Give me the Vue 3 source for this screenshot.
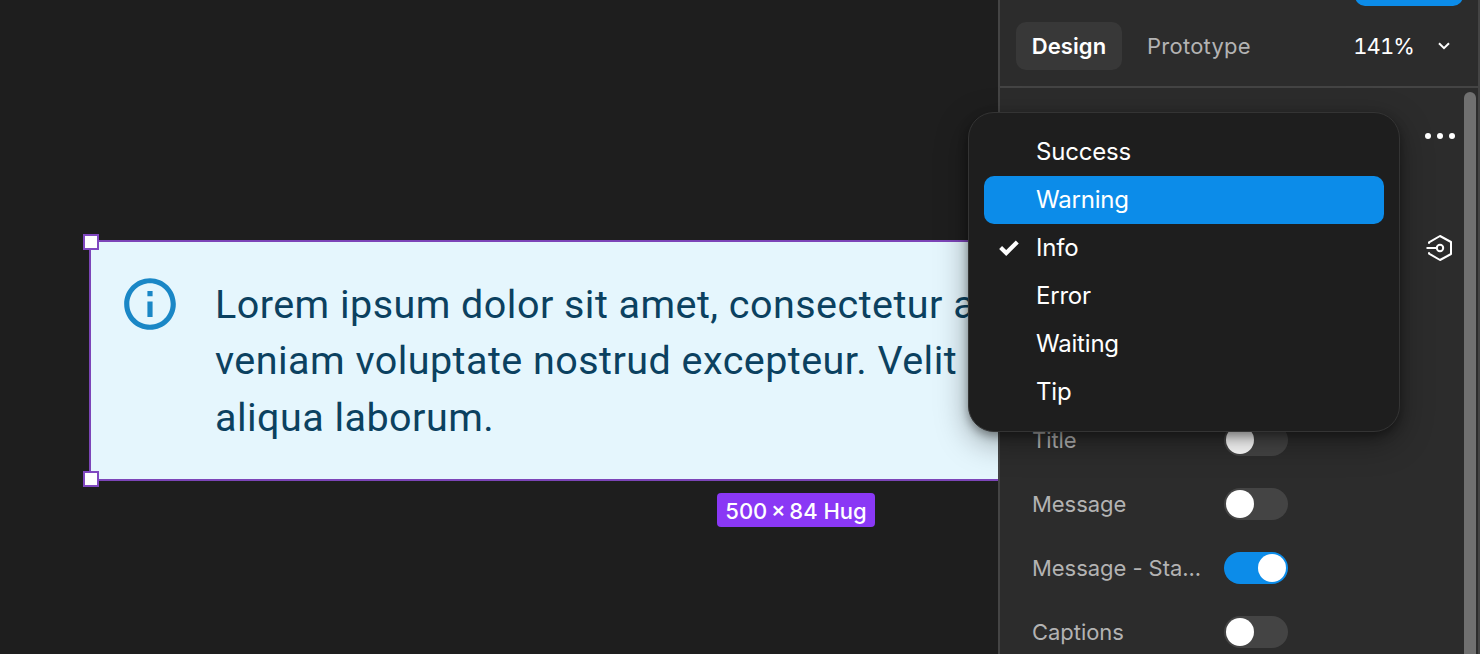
<template>
  <div class="editor">
    <main class="canvas">
      <div class="frame">
        <div class="alert">
          <svg class="alert-icon" viewBox="0 0 24 24" width="62" height="62" fill="#1a87c6"><path d="M11 7h2v2h-2zm0 4h2v6h-2zm1-9C6.48 2 2 6.48 2 12s4.48 10 10 10 10-4.48 10-10S17.52 2 12 2zm0 18c-4.41 0-8-3.59-8-8s3.59-8 8-8 8 3.59 8 8-3.59 8-8 8z"/></svg>
          <div class="alert-text">
            <div v-for="line in lines" :key="line" class="alert-line">{{ line }}</div>
          </div>
        </div>
        <span class="handle top"></span>
        <span class="handle bottom"></span>
        <span class="size-badge"><span class="size">500 × 84</span> Hug</span>
      </div>
    </main>
    <aside class="panel">
      <div class="share-btn"></div>
      <div class="panel-header">
        <button v-for="t in tabs" :key="t" class="tab" :class="{ active: activeTab === t }" @click="activeTab = t">{{ t }}</button>
        <div class="zoom">
          <span>141%</span>
          <svg viewBox="0 0 12 8" width="12" height="8" fill="none" stroke="#fff" stroke-width="2"><path d="M1 1.2l5 5 5-5"/></svg>
        </div>
      </div>
      <div class="panel-body">
        <div class="tools">
          <svg viewBox="0 0 30 6" width="30" height="6" fill="#fff"><circle cx="3" cy="3" r="3"/><circle cx="15" cy="3" r="3"/><circle cx="27" cy="3" r="3"/></svg>
          <svg class="instance-icon" viewBox="0 0 28 28" width="28" height="28" fill="none" stroke="#fff" stroke-width="2" stroke-linejoin="round"><path d="M4 9.8V8.4L15 2l11 6v12L15 26 4 19.6v-1.4"/><path d="M1.5 14h10"/><circle cx="15" cy="14" r="3.2"/></svg>
        </div>
        <div class="props">
          <div v-for="p in props" :key="p.name" class="prop">
            <span class="prop-name">{{ p.name }}</span>
            <span class="toggle" :class="{ on: p.on }" @click="p.on = !p.on"></span>
          </div>
        </div>
        <div class="scrollbar"></div>
      </div>
    </aside>
    <!-- variant dropdown -->
    <ul class="menu">
      <li v-for="o in options" :key="o" class="option" :class="{ hover: hovered === o }" @mouseenter="hovered = o" @click="selected = o">
        <span class="check">
          <svg v-if="selected === o" viewBox="0 0 20 16" width="20" height="16" fill="none" stroke="#fff" stroke-width="4.2"><path d="M1.6 7.6l5.6 5.4L18.3 2"/></svg>
        </span>
        <span class="option-name">{{ o }}</span>
      </li>
    </ul>
  </div>
</template>

<script setup>
import { ref } from 'vue'

const lines = [
  'Lorem ipsum dolor sit amet, consectetur a',
  'veniam voluptate nostrud excepteur. Velit',
  'aliqua laborum.',
]
const tabs = ['Design', 'Prototype']
const activeTab = ref('Design')
const options = ['Success', 'Warning', 'Info', 'Error', 'Waiting', 'Tip']
const selected = ref('Info')
const hovered = ref('Warning')
const props = ref([
  { name: 'Title', on: false },
  { name: 'Message', on: false },
  { name: 'Message - Sta...', on: true },
  { name: 'Captions', on: false },
])
</script>

<style>
body { margin: 0; background: #1e1e1e; overflow: hidden; }
</style>

<style scoped>
.editor { position: relative; display: flex; width: 1480px; height: 654px; overflow: hidden; background: #1e1e1e; color: #fff; font-family: Inter, sans-serif; box-sizing: border-box; }
.editor *, .editor { box-sizing: border-box; }
.canvas { width: 998px; flex: none; overflow: hidden; padding: 240px 0 0 89px; }
.frame { position: relative; width: 1410px; height: 240.5px; border: 2px solid #7c45b8; background: #e5f6fd; }
.alert { display: flex; padding: 31px 0 0 28px; }
.alert-icon { flex: none; }
.alert-text { margin: 4px 0 0 34px; font-family: Roboto, sans-serif; font-size: 39.5px; letter-spacing: 0.46px; color: #0b4160; white-space: nowrap; }
.alert-line { height: 56.4px; line-height: 56.4px; }
.handle { position: absolute; left: -8px; width: 16px; height: 16px; border: 2px solid #8048c0; background: #fff; }
.handle.top { top: -8px; }
.handle.bottom { bottom: -8px; }
.size-badge { position: absolute; left: 626px; top: 251px; width: 158px; height: 34px; border-radius: 4px; background: #8a38f5; font-size: 22px; font-weight: 500; line-height: 36px; text-align: center; white-space: nowrap; }
.size { word-spacing: -2.2px; }
.panel { position: relative; display: flex; flex-direction: column; width: 482px; background: #2c2c2c; border-left: 2px solid #444; border-right: 2px solid #444; }
.share-btn { position: absolute; top: -42px; right: 15px; width: 108px; height: 48px; border-radius: 10px; background: #0c8ce9; }
.panel-header { display: flex; align-items: center; height: 88px; padding: 0 27px 0 16px; margin-right: -2px; border-bottom: 2px solid #444; flex: none; }
.tab { height: 48px; margin-top: 6px; padding: 0; border: none; border-radius: 10px; background: none; color: #b3b3b3; font-family: inherit; font-size: 22px; letter-spacing: 0.25px; cursor: pointer; }
.tab.active { width: 106px; margin-right: 25px; background: #383838; color: #fff; font-weight: 600; letter-spacing: 0.1px; }
.zoom { display: flex; align-items: center; gap: 24px; margin: 6px 3px 0 auto; font-size: 22px; letter-spacing: -0.9px; font-variant-numeric: tabular-nums; }
.panel-body { position: relative; flex: 1; display: flex; flex-direction: column; }
.tools { display: flex; flex-direction: column; align-items: flex-end; height: 320px; padding: 45px 23px 0 0; }
.instance-icon { margin: 95px 2px 0 0; }
.props { padding-left: 32px; }
.prop { display: flex; align-items: center; height: 64px; }
.prop-name { width: 192px; color: #b3b3b3; font-size: 22px; letter-spacing: -0.05px; white-space: nowrap; }
.toggle { display: flex; width: 64px; height: 32px; padding: 2px; border-radius: 16px; background: #444; }
.toggle::before { content: ''; width: 28px; height: 28px; border-radius: 50%; background: #fff; }
.toggle.on { justify-content: flex-end; background: #0c8ce9; }
.scrollbar { position: absolute; top: 4px; right: 2px; width: 12px; height: 700px; border-radius: 6px; background: #707070; }
.menu { position: absolute; left: 968px; top: 112px; width: 432px; height: 320px; margin: 0; padding: 15px; list-style: none; background: #1e1e1e; border: 1px solid #343434; border-radius: 26px; box-shadow: 0 10px 32px rgba(0, 0, 0, 0.35), 0 4px 10px rgba(0, 0, 0, 0.35); }
.option { display: flex; align-items: center; height: 48px; border-radius: 10px; font-size: 24px; letter-spacing: -0.2px; cursor: pointer; }
.option.hover { background: #0c8ce9; }
.option-name { padding-bottom: 2px; }
.check { display: flex; width: 52px; padding-left: 15px; }
</style>
